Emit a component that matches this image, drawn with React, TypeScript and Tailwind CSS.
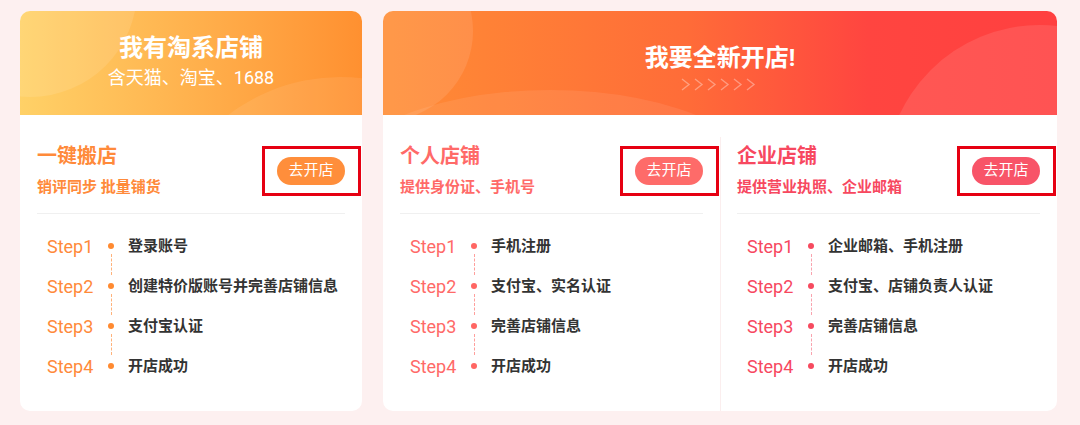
import React from "react";

type Col = {
  title: string;
  desc: string;
  text: string;
  btn: string;
  dot: string;
  dash: string;
  steps: string[];
};

const MOVE: Col = {
  title: "一键搬店",
  desc: "销评同步 批量铺货",
  text: "text-[#ff8a3a]",
  btn: "bg-[#ff8e3b]",
  dot: "bg-[#ff8a30]",
  dash: "border-[#ffb27a]",
  steps: ["登录账号", "创建特价版账号并完善店铺信息", "支付宝认证", "开店成功"],
};

const PERSONAL: Col = {
  title: "个人店铺",
  desc: "提供身份证、手机号",
  text: "text-[#ff6a68]",
  btn: "bg-[#fe6b69]",
  dot: "bg-[#ff6663]",
  dash: "border-[#ff9f9c]",
  steps: ["手机注册", "支付宝、实名认证", "完善店铺信息", "开店成功"],
};

const COMPANY: Col = {
  title: "企业店铺",
  desc: "提供营业执照、企业邮箱",
  text: "text-[#f7485f]",
  btn: "bg-[#f85468]",
  dot: "bg-[#f64a5f]",
  dash: "border-[#f9a3ae]",
  steps: ["企业邮箱、手机注册", "支付宝、店铺负责人认证", "完善店铺信息", "开店成功"],
};

function Column({ col, className = "" }: { col: Col; className?: string }) {
  return (
    <div className={`pt-[28px] ${className}`}>
      {/* title + button */}
      <div className="flex items-center justify-between border-b border-[#f0f0f0] pb-[15px]">
        <div className={col.text}>
          <div className="text-[20px] font-bold leading-[26px]">{col.title}</div>
          <div className="mt-[7px] text-[15px] font-bold leading-[22px]">{col.desc}</div>
        </div>
        <div className="relative">
          <button className={`flex h-[28px] w-[68px] items-center justify-center rounded-full text-[15px] text-white ${col.btn}`}>
            去开店
          </button>
          <div className="pointer-events-none absolute -top-[11px] -right-[16px] -bottom-[11px] -left-[15px] border-[3px] border-[#e60012]" />
        </div>
      </div>

      {/* steps */}
      <div className="pt-[12px] pl-[10px]">
        {col.steps.map((s, i) => (
          <div key={s} className="flex h-[40px] items-center">
            <span className={`w-[58px] text-[18px] ${col.text}`}>Step{i + 1}</span>
            <div className="relative flex h-full w-[12px] items-center justify-center">
              <span className={`h-[6px] w-[6px] rounded-full ${col.dot}`} />
              {i < col.steps.length - 1 && (
                <span className={`absolute top-[28px] left-[5.5px] h-[21px] border-l border-dashed ${col.dash}`} />
              )}
            </div>
            <span className="ml-[11px] text-[15px] font-bold text-[#333]">{s}</span>
          </div>
        ))}
      </div>
    </div>
  );
}

function Arrows() {
  return (
    <svg width="80" height="13" viewBox="0 0 80 13" className="mx-auto block">
      {[0, 1, 2, 3, 4, 5].map((i) => (
        <path
          key={i}
          d={`M${2 + i * 13} 1 L${9 + i * 13} 6.5 L${2 + i * 13} 12`}
          fill="none"
          stroke="white"
          strokeOpacity={0.35}
          strokeWidth={1.4}
        />
      ))}
    </svg>
  );
}

export default function App() {
  return (
    <div
      className="flex h-[425px] w-[1080px] gap-[21px] bg-[#fdf0f0] pt-[11px] pl-[20px]"
      style={{ fontFamily: "Roboto, 'Noto Sans CJK SC', sans-serif" }}
    >
      {/* Card 1 */}
      <div className="flex h-[400px] w-[342px] flex-col rounded-[10px] bg-white">
        <div className="relative h-[104px] overflow-hidden rounded-t-[10px] bg-linear-to-r from-[#ffd167] to-[#ff9030] text-center text-white">
          <div className="absolute -top-[128px] -left-[97px] h-[214px] w-[214px] rounded-full bg-white/10" />
          <div className="absolute top-[66px] left-[137px] h-[366px] w-[366px] rounded-full bg-white/8" />
          <div className="relative pt-[21px] text-[24px] font-bold leading-[32px]">我有淘系店铺</div>
          <div className="relative mt-[1px] text-[18px] leading-[26px]">含天猫、淘宝、1688</div>
        </div>
        <Column col={MOVE} className="px-[17px]" />
      </div>

      {/* Card 2 */}
      <div className="flex h-[400px] w-[674px] flex-col rounded-[10px] bg-white">
        <div className="relative h-[104px] overflow-hidden rounded-t-[10px] bg-[linear-gradient(90deg,#ff8d35_0%,#ff6c38_45%,#ff4540_72%,#ff4040_100%)] text-center text-white">
          <div className="absolute -top-[70px] -left-[90px] h-[180px] w-[180px] rounded-full bg-white/10" />
          <div className="absolute top-[79px] -left-[63px] h-[220px] w-[460px] rounded-[50%] bg-white/8" />
          <div className="absolute top-[14px] left-[502px] h-[310px] w-[310px] rounded-full bg-white/10" />
          <div className="relative pt-[31px] text-[24px] font-bold leading-[32px]">我要全新开店!</div>
          <div className="relative mt-[4px]">
            <Arrows />
          </div>
        </div>
        <div className="flex flex-1">
          <Column col={PERSONAL} className="w-[337px] pr-[17px] pl-[17px]" />
          <div className="mt-[22px] w-px bg-[#fbeeee]" />
          <Column col={COMPANY} className="flex-1 pr-[17px] pl-[16px]" />
        </div>
      </div>
    </div>
  );
}
